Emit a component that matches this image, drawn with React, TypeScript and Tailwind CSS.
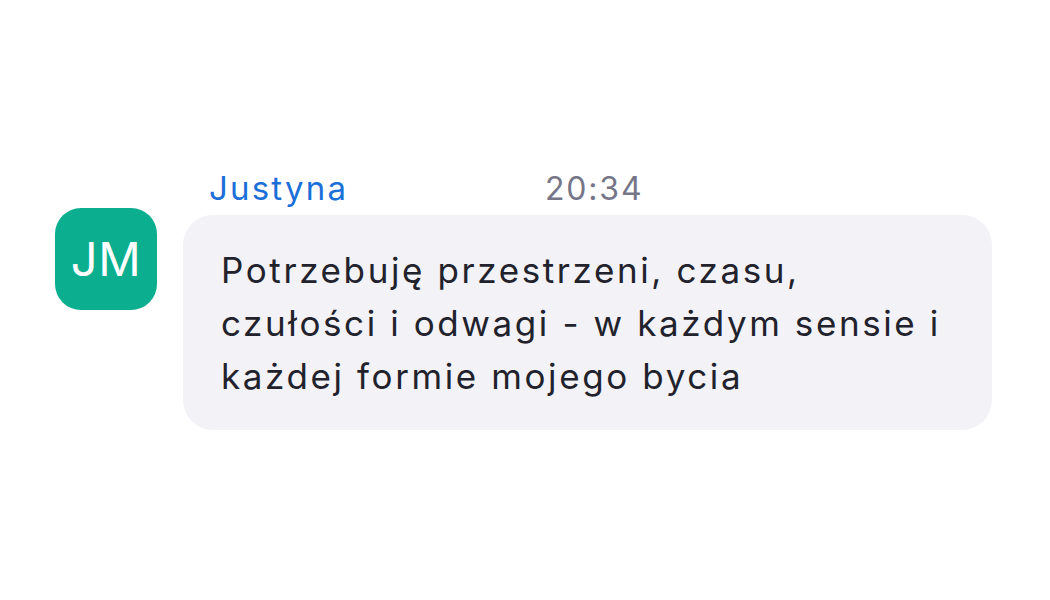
import React from 'react';

export default function App() {
  return (
    <div className="w-[1050px] h-[600px] bg-white pl-[55px] pt-[166px]" style={{ fontFamily: 'Inter, "Noto Sans", sans-serif' }}>
      <div className="flex items-start">
        <div className="mt-[42px] w-[102px] h-[102px] rounded-[26px] bg-[#0baf8f] flex items-center justify-center text-white text-[47px] tracking-[0.5px]">
          JM
        </div>
        <div className="ml-[26px] flex flex-col">
          <div className="flex items-baseline pl-[26px] h-[49px] leading-[44px]">
            <span className="w-[336px] text-[33px] tracking-[2.2px] text-[#1b6fd8]">Justyna</span>
            <span className="text-[32px] tracking-[1.8px] text-[#767689]">20:34</span>
          </div>
          <div className="w-[809px] rounded-[30px] bg-[#f2f2f7] pl-[38px] pr-[30px] pt-[29px] pb-[27px] text-[35px] tracking-[2.6px] leading-[53px] text-[#22222c]">
            Potrzebuję przestrzeni, czasu,
            <br />
            czułości i odwagi - w każdym sensie i
            <br />
            każdej formie mojego bycia
          </div>
        </div>
      </div>
    </div>
  );
}
